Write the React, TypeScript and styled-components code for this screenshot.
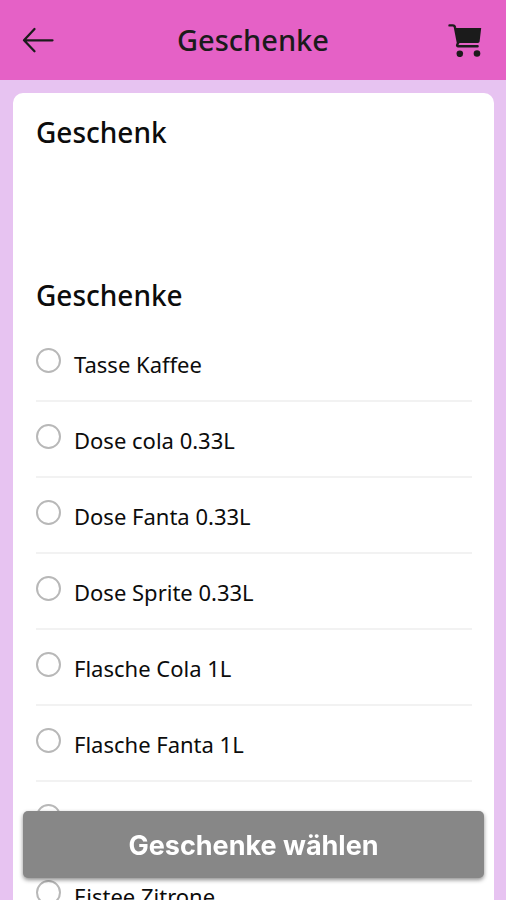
import React, { useState } from "react";
import styled, { createGlobalStyle } from "styled-components";

const GlobalStyle = createGlobalStyle`
  *, *::before, *::after { box-sizing: border-box; }
  body {
    margin: 0;
    background: #e7c3f1;
    color: #0c0c0c;
    font-family: "Noto Sans", sans-serif;
  }
`;

const Screen = styled.div`
  display: flex;
  flex-direction: column;
  height: 100vh;
  overflow: hidden;
`;

const TopBar = styled.header`
  display: grid;
  grid-template-columns: 40px 1fr 40px;
  align-items: center;
  flex: none;
  height: 80px;
  padding: 0 18px;
  background: #e561c6;
  color: #1b1b1b;
`;

const IconButton = styled.button`
  display: flex;
  align-items: center;
  justify-content: center;
  width: 40px;
  height: 40px;
  padding: 0;
  border: 0;
  background: none;
  color: inherit;
  cursor: pointer;
`;

const Title = styled.h1`
  margin: 0;
  font-size: 29px;
  font-weight: 500;
  line-height: 40px;
  text-align: center;
`;

const Content = styled.main`
  flex: 1;
  min-height: 0;
  overflow-y: auto;
  scrollbar-width: none;
  padding: 13px 12px 0 13px;
`;

const Card = styled.div`
  padding: 20px 22px 96px 23px;
  border-radius: 10px;
  background: #fff;
`;

const Intro = styled.section`
  min-height: 163px;
`;

const Heading = styled.h2`
  margin: 0;
  font-size: 28px;
  font-weight: 500;
  line-height: 38px;
`;

const Choices = styled.fieldset`
  margin: 0;
  padding: 0;
  border: 0;
  min-width: 0;
`;

const Choice = styled.label`
  display: flex;
  align-items: center;
  gap: 13px;
  height: 76px;
  border-bottom: 2px solid #f2f2f2;
  cursor: pointer;

  &:first-of-type {
    height: 88px;
    padding-top: 12px;
  }
`;

const Radio = styled.input`
  appearance: none;
  flex: none;
  width: 25px;
  height: 25px;
  margin: 0 0 6px;
  border: 2px solid #b8b8b8;
  border-radius: 50%;
  background: #fff;

  &:checked {
    border: 7px solid #e561c6;
  }
`;

const ChoiceText = styled.span`
  padding-top: 2px;
  font-size: 22px;
  line-height: 32px;
`;

const BottomAction = styled.div`
  position: fixed;
  right: 22px;
  bottom: 22px;
  left: 23px;
  display: flex;
`;

const SubmitButton = styled.button`
  flex: 1;
  height: 67px;
  padding: 2px 16px 0;
  border: 0;
  border-radius: 5px;
  background: #878787;
  box-shadow: 0 2px 4px rgba(0, 0, 0, 0.45);
  color: #fff;
  font-family: Inter, sans-serif;
  font-size: 27px;
  font-weight: 700;
  cursor: pointer;
`;

const gifts = [
  "Tasse Kaffee",
  "Dose cola 0.33L",
  "Dose Fanta 0.33L",
  "Dose Sprite 0.33L",
  "Flasche Cola 1L",
  "Flasche Fanta 1L",
  "Flasche Sprite 1L",
  "Eistee Zitrone",
];

const BackIcon = () => (
  <svg width="32" height="26" viewBox="0 0 32 26" fill="none" stroke="currentColor" strokeWidth="2.3" strokeLinecap="round" strokeLinejoin="round" aria-hidden="true">
    <path d="M12.5 2 2 13.3l10.5 10.9M2 13.3h28.5" />
  </svg>
);

const CartIcon = () => (
  <svg width="40" height="34" viewBox="0 0 40 34" aria-hidden="true">
    <path d="M1.5 2.4h3.2c1.600 0 2.100.8 2.300 2.100l3 15.400-.8 2c-.3.8.1 1.300.9 1.300h19.500" fill="none" stroke="currentColor" strokeWidth="2.400" strokeLinecap="round" strokeLinejoin="round" />
    <path d="M6.800 5H33.200l-1.600 13.600c-.1.900-.7 1.400-1.700 1.400H11.600l-1.500 1.500Z" fill="currentColor" />
    <circle cx="11.800" cy="30.800" r="3.300" fill="currentColor" />
    <circle cx="29" cy="30.500" r="3.300" fill="currentColor" />
  </svg>
);

export default function App() {
  const [selected, setSelected] = useState<string | null>(null);

  return (
    <Screen>
      <GlobalStyle />
      <TopBar>
        <IconButton type="button" aria-label="Zurück">
          <BackIcon />
        </IconButton>
        <Title>Geschenke</Title>
        <IconButton type="button" aria-label="Warenkorb">
          <CartIcon />
        </IconButton>
      </TopBar>
      <Content>
        <Card>
          <Intro>
            <Heading>Geschenk</Heading>
          </Intro>
          <Heading id="gifts-heading">Geschenke</Heading>
          <Choices aria-labelledby="gifts-heading">
            {gifts.map((gift) => (
              <Choice key={gift}>
                <Radio
                  type="radio"
                  name="gift"
                  value={gift}
                  checked={selected === gift}
                  onChange={() => setSelected(gift)}
                />
                <ChoiceText>{gift}</ChoiceText>
              </Choice>
            ))}
          </Choices>
        </Card>
      </Content>
      <BottomAction>
        <SubmitButton type="button">Geschenke wählen</SubmitButton>
      </BottomAction>
    </Screen>
  );
}
